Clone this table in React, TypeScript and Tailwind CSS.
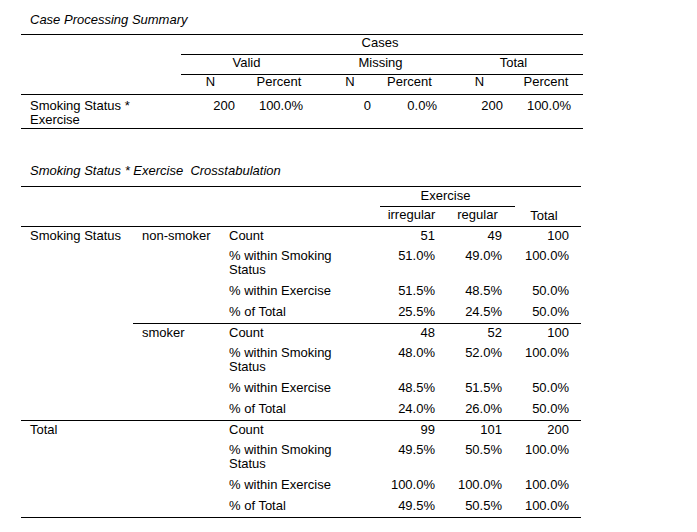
const cellNum = 'text-right whitespace-nowrap';

type Row = { label: React.ReactNode; h: string; pt: string; vals: string[] };

const mkRows = (v: string[][]): Row[] => [
  { label: 'Count', h: 'h-[20px]', pt: 'pt-[2px] leading-[14px]', vals: v[0] },
  {
    label: (
      <>
        % within Smoking
        <br />
        Status
      </>
    ),
    h: 'h-[35px]',
    pt: 'pt-[2px] leading-[14px]',
    vals: v[1],
  },
  { label: '% within Exercise', h: 'h-[21px]', pt: 'pt-[2px] leading-[14px]', vals: v[2] },
  { label: '% of Total', h: 'h-[20px]', pt: 'pt-[2px] leading-[14px]', vals: v[3] },
];

const nonSmoker = mkRows([
  ['51', '49', '100'],
  ['51.0%', '49.0%', '100.0%'],
  ['51.5%', '48.5%', '50.0%'],
  ['25.5%', '24.5%', '50.0%'],
]);
const smoker = mkRows([
  ['48', '52', '100'],
  ['48.0%', '52.0%', '100.0%'],
  ['48.5%', '51.5%', '50.0%'],
  ['24.0%', '26.0%', '50.0%'],
]);
const total = mkRows([
  ['99', '101', '200'],
  ['49.5%', '50.5%', '100.0%'],
  ['100.0%', '100.0%', '100.0%'],
  ['49.5%', '50.5%', '100.0%'],
]);

function StatRows({ rows }: { rows: Row[] }) {
  return (
    <div className="flex flex-col">
      {rows.map((r, i) => (
        <div key={i} className={`grid grid-cols-[160px_68px_67px_66px] ${r.h} ${r.pt}`}>
          <div className="pl-[9px]">{r.label}</div>
          <div className={`${cellNum} pr-[13px]`}>{r.vals[0]}</div>
          <div className={`${cellNum} pr-[13px]`}>{r.vals[1]}</div>
          <div className={`${cellNum} pr-[12px]`}>{r.vals[2]}</div>
        </div>
      ))}
    </div>
  );
}

function CaseSummary() {
  return (
    <div>
      <div className="pl-[9px] italic leading-[15px] mb-[7px]">Case Processing Summary</div>
      <div className="w-[562px] border-t border-b border-black">
        {/* header */}
        <div className="flex border-b border-black">
          <div className="w-[160px]" />
          <div className="flex flex-col w-[402px]">
            <div className="h-[20px] border-b border-black text-center pr-[4px] pt-[1px] leading-[14px]">Cases</div>
            <div className="h-[20px] border-b border-black grid grid-cols-[137px_132px_133px] pt-[1px] leading-[14px]">
              <div className="text-center pr-[6px]">Valid</div>
              <div className="text-center pr-[7px]">Missing</div>
              <div className="text-center pr-[6px]">Total</div>
            </div>
            <div className="h-[19px] grid grid-cols-[64px_73px_69px_63px_64px_69px] pt-[0px] leading-[14px]">
              <div className="text-center pr-[5px]">N</div>
              <div className="text-center pr-[5px]">Percent</div>
              <div className="text-center pr-[5px]">N</div>
              <div className="text-center pr-[19px]">Percent</div>
              <div className="text-center pr-[5px]">N</div>
              <div className="text-center pr-[5px]">Percent</div>
            </div>
          </div>
        </div>
        {/* data */}
        <div className="h-[33px] grid grid-cols-[160px_64px_73px_69px_63px_64px_69px] pt-[4px] leading-[14px]">
          <div className="pl-[9px]">
            Smoking Status *
            <br />
            Exercise
          </div>
          <div className={`${cellNum} pr-[10px]`}>200</div>
          <div className={`${cellNum} pr-[15px]`}>100.0%</div>
          <div className={`${cellNum} pr-[16px]`}>0</div>
          <div className={`${cellNum} pr-[13px]`}>0.0%</div>
          <div className={`${cellNum} pr-[11px]`}>200</div>
          <div className={`${cellNum} pr-[12px]`}>100.0%</div>
        </div>
      </div>
    </div>
  );
}

function Crosstab() {
  return (
    <div>
      <div className="pl-[9px] italic leading-[15px] mb-[8px] whitespace-pre">
        {'Smoking Status * Exercise  Crosstabulation'}
      </div>
      <div className="w-[560px] border-t border-b border-black">
        {/* header */}
        <div className="flex border-b border-black">
          <div className="w-[359px]" />
          <div className="flex flex-col w-[135px]">
            <div className="h-[20px] border-b border-black text-center pr-[4px] pt-[2px] leading-[14px]">Exercise</div>
            <div className="h-[19px] grid grid-cols-[68px_67px] pt-[1px] leading-[14px]">
              <div className="text-center pr-[5px]">irregular</div>
              <div className="text-center pr-[8px]">regular</div>
            </div>
          </div>
          <div className="w-[66px] flex flex-col justify-end">
            <div className="h-[19px] text-center pr-[8px] pt-[2px] leading-[14px]">Total</div>
          </div>
        </div>
        {/* Smoking Status section */}
        <div className="flex">
          <div className="w-[112px] pl-[9px] pt-[2px] leading-[14px]">Smoking Status</div>
          <div className="flex flex-col">
            <div className="flex">
              <div className="w-[87px] pl-[9px] pt-[2px] leading-[14px]">non-smoker</div>
              <StatRows rows={nonSmoker} />
            </div>
            <div className="flex border-t border-black">
              <div className="w-[87px] pl-[9px] pt-[2px] leading-[14px]">smoker</div>
              <StatRows rows={smoker} />
            </div>
          </div>
        </div>
        {/* Total section */}
        <div className="flex border-t border-black">
          <div className="w-[199px] pl-[9px] pt-[2px] leading-[14px]">Total</div>
          <StatRows rows={total} />
        </div>
      </div>
    </div>
  );
}

export default function App() {
  return (
    <div className="min-h-[532px] w-[697px] bg-white text-black text-[13px] font-['Liberation_Sans',Arial,sans-serif] pl-[21px] pt-[12px]">
      <CaseSummary />
      <div className="h-[34px]" />
      <Crosstab />
    </div>
  );
}
